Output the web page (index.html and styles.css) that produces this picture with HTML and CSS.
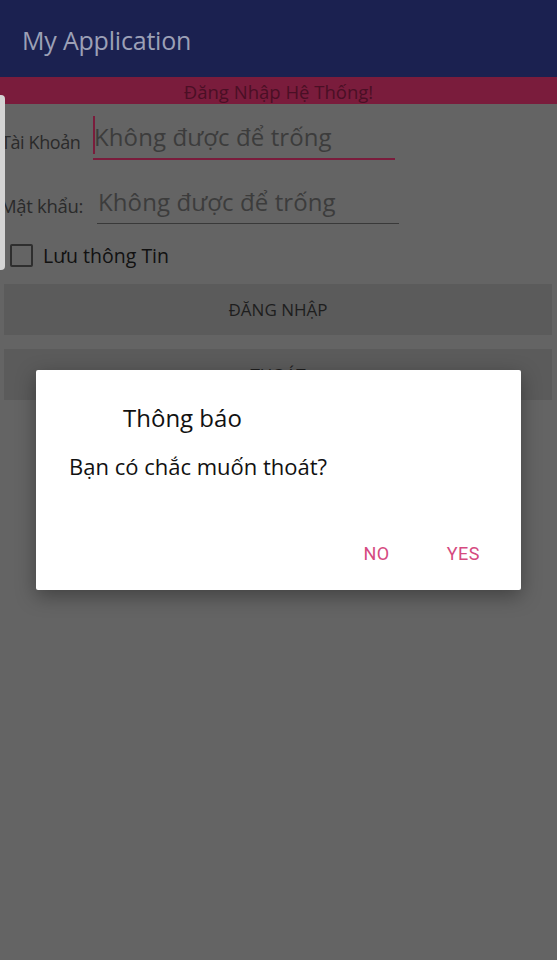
FILE: index.html
```html
<!DOCTYPE html>
<html lang="vi">
<head>
<meta charset="utf-8">
<link rel="stylesheet" href="styles.css">
</head>
<body>
<div class="screen">
  <header class="appbar"><span class="app-title">My Application</span></header>
  <div class="banner">Đăng Nhập Hệ Thống!</div>
  <main class="form">
    <div class="field field-account">
      <span class="label">Tài Khoản</span>
      <div class="input active"><span class="cursor"></span><span class="hint">Không được để trống</span></div>
    </div>
    <div class="field field-pass">
      <span class="label">Mật khẩu:</span>
      <div class="input"><span class="hint">Không được để trống</span></div>
    </div>
    <label class="check-row"><span class="checkbox"></span><span class="check-label">Lưu thông Tin</span></label>
    <div class="btn btn-login">ĐĂNG NHẬP</div>
    <div class="btn btn-exit">THOÁT</div>
  </main>
  <div class="edge-handle"></div>
  <div class="dialog">
    <div class="dialog-title">Thông báo</div>
    <div class="dialog-msg">Bạn có chắc muốn thoát?</div>
    <div class="dialog-actions">
      <span class="action">NO</span>
      <span class="action">YES</span>
    </div>
  </div>
</div>
</body>
</html>
```
FILE: styles.css
```css
* { box-sizing: border-box; }
html, body { margin: 0; padding: 0; }
body {
  width: 557px;
  height: 960px;
  overflow: hidden;
  background: #646464;
  font-family: "Open Sans", "Noto Sans", sans-serif;
}
.screen {
  position: relative;
  width: 557px;
  height: 960px;
  background: #646464;
}
.appbar {
  height: 77px;
  background: #1b2150;
  display: flex;
  align-items: center;
  padding-left: 22px;
  padding-top: 2px;
}
.app-title {
  color: #9ca0b6;
  font-size: 25px;
  letter-spacing: -0.2px;
}
.banner {
  height: 27px;
  background: #7a1c3c;
  color: #4a0f25;
  font-size: 18.5px;
  text-align: center;
  line-height: 29px;
}
.form {
  display: flex;
  flex-direction: column;
}
.field {
  display: flex;
  align-items: flex-end;
  height: 64px;
}
.field-account { height: 56px; }
.label {
  color: #2a2a2a;
  font-size: 18px;
  flex: none;
  white-space: nowrap;
}
.field-account .label { padding-left: 1px; width: 93px; padding-bottom: 6px; letter-spacing: -0.4px; }
.field-pass .label { width: 97px; padding-bottom: 6px; font-size: 18.5px; letter-spacing: -0.3px; }
.input {
  position: relative;
  width: 302px;
  height: 44px;
  border-bottom: 1px solid #393939;
  display: flex;
  align-items: center;
}
.input.active {
  border-bottom: 2px solid #7a1c3c;
  height: 46px;
}
.hint {
  color: #3c3c3c;
  font-size: 24px;
  letter-spacing: 0.1px;
  padding-left: 1px;
  white-space: nowrap;
}
.cursor {
  position: absolute;
  left: 0;
  top: 2px;
  width: 2px;
  height: 38px;
  background: #7a1c3c;
}
.check-row {
  display: flex;
  align-items: center;
  height: 40px;
  padding-left: 10px;
  margin-top: 11px;
}
.checkbox {
  width: 23px;
  height: 23px;
  border: 2px solid #2e2e2e;
  border-radius: 2px;
}
.check-label {
  margin-left: 10px;
  font-size: 19.5px;
  color: #111;
}
.btn {
  margin: 0 5px 0 4px;
  height: 51px;
  background: #5b5b5b;
  color: #1e1e1e;
  font-size: 17px;
  display: flex;
  align-items: center;
  justify-content: center;
}
.btn-login { margin-top: 9px; }
.btn-exit { margin-top: 14px; }
.edge-handle {
  position: absolute;
  left: 0;
  top: 95px;
  width: 5px;
  height: 175px;
  background: #d4d4d4;
  border-radius: 0 4px 4px 0;
}
.dialog {
  position: absolute;
  left: 36px;
  top: 370px;
  width: 485px;
  height: 220px;
  background: #fff;
  border-radius: 2px;
  box-shadow: 0 6px 20px rgba(0,0,0,0.35);
  display: flex;
  flex-direction: column;
}
.dialog-title {
  padding: 30px 0 0 87px;
  font-size: 24px;
  color: #111;
  line-height: 36px;
}
.dialog-msg {
  padding: 15px 0 0 33px;
  font-size: 22px;
  color: #111;
  line-height: 30px;
}
.dialog-actions {
  margin-top: auto;
  display: flex;
  justify-content: flex-end;
  gap: 57px;
  padding: 0 41px 26px 0;
}
.action {
  color: #d54a80;
  font-family: Roboto, "Open Sans", sans-serif;
  font-size: 18px;
  letter-spacing: 0.5px;
}
```
